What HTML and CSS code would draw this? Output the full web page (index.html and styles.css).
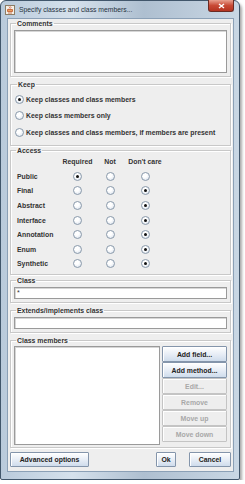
FILE: index.html
```html
<!DOCTYPE html>
<html lang="en">
<head>
    <meta charset="UTF-8">
    <title>Specify classes and class members...</title>
    <link rel="stylesheet" href="styles.css">
</head>
<body>
    <div class="window">
        <div class="titlebar">
            <span class="app-icon">
                <svg width="10" height="10" viewBox="0 0 10 10">
                    <rect x="0.5" y="0.5" width="9" height="9" fill="#f4f1e8" stroke="#8c7d66"/>
                    <path d="M3 8 h4 M2.5 6.5 h5 v-2 h-5 z" stroke="#c0572a" fill="#e9a060" stroke-width="0.8"/>
                    <path d="M4 3.5 q1 -1 0 -2 M5.5 3.5 q1 -1 0 -2" stroke="#d04020" fill="none" stroke-width="0.7"/>
                </svg>
            </span>
            <span class="title">Specify classes and class members...</span>
            <span class="close">
                <svg width="7" height="6" viewBox="0 0 7 6">
                    <path d="M1 1 L6 5 M6 1 L1 5" stroke="#fff" stroke-width="1.4"/>
                </svg>
            </span>
        </div>
        <div class="client">
            <fieldset class="group comments-group">
                <legend>Comments</legend>
                <div class="textarea comments"></div>
            </fieldset>

            <fieldset class="group keep">
                <legend>Keep</legend>
                <div class="radio-row"><span class="radio on"></span>Keep classes and class members</div>
                <div class="radio-row"><span class="radio"></span>Keep class members only</div>
                <div class="radio-row"><span class="radio"></span>Keep classes and class members, if members are present</div>
            </fieldset>

            <fieldset class="group access">
                <legend>Access</legend>
                <div class="access-grid">
                    <span></span><span class="head">Required</span><span class="head">Not</span><span class="head">Don't care</span>
                    <span class="name">Public</span><span class="cell"><span class="radio on"></span></span><span class="cell"><span class="radio"></span></span><span class="cell"><span class="radio"></span></span>
                    <span class="name">Final</span><span class="cell"><span class="radio"></span></span><span class="cell"><span class="radio"></span></span><span class="cell"><span class="radio on"></span></span>
                    <span class="name">Abstract</span><span class="cell"><span class="radio"></span></span><span class="cell"><span class="radio"></span></span><span class="cell"><span class="radio on"></span></span>
                    <span class="name">Interface</span><span class="cell"><span class="radio"></span></span><span class="cell"><span class="radio"></span></span><span class="cell"><span class="radio on"></span></span>
                    <span class="name">Annotation</span><span class="cell"><span class="radio"></span></span><span class="cell"><span class="radio"></span></span><span class="cell"><span class="radio on"></span></span>
                    <span class="name">Enum</span><span class="cell"><span class="radio"></span></span><span class="cell"><span class="radio"></span></span><span class="cell"><span class="radio on"></span></span>
                    <span class="name">Synthetic</span><span class="cell"><span class="radio"></span></span><span class="cell"><span class="radio"></span></span><span class="cell"><span class="radio on"></span></span>
                </div>
            </fieldset>

            <fieldset class="group class-group">
                <legend>Class</legend>
                <div class="textfield">*</div>
            </fieldset>

            <fieldset class="group">
                <legend>Extends/implements class</legend>
                <div class="textfield"></div>
            </fieldset>

            <fieldset class="group members">
                <legend>Class members</legend>
                <div class="members-body">
                    <div class="textarea list"></div>
                    <div class="member-buttons">
                        <button>Add field...</button>
                        <button>Add method...</button>
                        <button disabled>Edit...</button>
                        <button disabled>Remove</button>
                        <button disabled>Move up</button>
                        <button disabled>Move down</button>
                    </div>
                </div>
            </fieldset>

            <div class="footer">
                <button class="advanced">Advanced options</button>
                <div class="spacer"></div>
                <button class="ok">Ok</button>
                <button class="cancel">Cancel</button>
            </div>
        </div>
    </div>
</body>
</html>
```

FILE: styles.css
```css
body {
    margin: 0;
    background-color: #ffffff;
    font-family: 'Liberation Sans', Arial, sans-serif;
}
.window {
    width: 240px;
    height: 480px;
    box-sizing: border-box;
    border: 1px solid #41566b;
    border-radius: 6px 6px 2px 2px;
    background: linear-gradient(90deg, #b9cadb 0%, #d5e1ec 30%, #aebfd0 60%, #c9d7e4 100%);
    box-shadow: 2px 3px 3px rgba(0, 0, 0, 0.35);
    padding: 0 5px 7px 6px;
    display: flex;
    flex-direction: column;
}
.titlebar {
    height: 17px;
    flex-shrink: 0;
    display: flex;
    align-items: center;
    position: relative;
}
.app-icon {
    display: flex;
    margin: 0 4px 0 -2px;
}
.title {
    font-size: 6.8px;
    color: #26323e;
}
.close {
    position: absolute;
    right: 0;
    top: -1px;
    width: 24px;
    height: 11px;
    border: 1px solid #6b2a22;
    border-top: none;
    border-radius: 0 0 3px 3px;
    background: linear-gradient(#e8a08f, #c84a35 50%, #b43320);
    display: flex;
    align-items: center;
    justify-content: center;
}
.client {
    flex: 1;
    background-color: #eeeeee;
    border: 1px solid #8ba0b6;
    padding: 0 2px 3px 2px;
    display: flex;
    flex-direction: column;
    font-size: 6.9px;
    font-weight: bold;
    color: #333333;
}
.group {
    margin: 3px 0 0 0;
    padding: 0 3px 3px 3px;
    border: 1px solid #c8c8c8;
    box-shadow: inset 1px 1px 0 #ffffff, 1px 1px 0 #ffffff;
    min-width: 0;
}
.comments-group {
    margin-top: 0;
}
legend {
    padding: 0 1px;
    margin-left: 2px;
    color: #333333;
    line-height: 9px;
}
.textarea {
    background: #ffffff;
    border: 1px solid #9a9a9a;
    box-shadow: inset 1px 1px 0 #d6d6d6;
}
.comments {
    height: 41px;
    margin-top: 2px;
}
.keep {
    padding: 2px 3px 4px 4px;
}
.radio-row {
    display: flex;
    align-items: center;
    height: 16.5px;
}
.radio-row .radio {
    margin-right: 2px;
}
.radio {
    display: inline-block;
    width: 7px;
    height: 7px;
    border-radius: 50%;
    border: 1px solid #8a9aab;
    background: radial-gradient(circle at 40% 35%, #ffffff 30%, #d5deea 100%);
    position: relative;
}
.radio.on::after {
    content: '';
    position: absolute;
    left: 2px;
    top: 2px;
    width: 3px;
    height: 3px;
    border-radius: 50%;
    background: #111111;
}
.access {
    margin-top: 0;
}
.access-grid {
    display: grid;
    grid-template-columns: 44px 33px 32px 38px;
    grid-auto-rows: 14.6px;
    align-items: center;
    padding-left: 3px;
}
.head {
    text-align: center;
}
.cell {
    display: flex;
    justify-content: center;
}
.class-group {
    margin-top: 1px;
}
.textfield {
    height: 10px;
    margin-top: 2px;
    background: #ffffff;
    border: 1px solid #9a9a9a;
    box-shadow: inset 1px 1px 0 #d6d6d6;
    font-weight: normal;
    font-size: 7px;
    line-height: 9px;
    padding-left: 2px;
}
.members {
    padding-bottom: 2px;
}
.members-body {
    display: flex;
    gap: 2px;
    margin-top: 1px;
}
.list {
    flex: 1;
    height: 97px;
}
.member-buttons {
    width: 65px;
    display: flex;
    flex-direction: column;
}
button {
    font-family: 'Liberation Sans', Arial, sans-serif;
    font-size: 6.9px;
    font-weight: bold;
    color: #222222;
    height: 16px;
    padding: 0;
    border: 1px solid #8495ab;
    border-radius: 1px;
    background: linear-gradient(#ffffff, #e8eef6 50%, #cfdcec);
    box-shadow: inset 1px 1px 0 #ffffff;
}
button:disabled {
    color: #a8a8a8;
    border-color: #c4c4c4;
    background: #eeeeee;
}
.footer {
    display: flex;
    align-items: center;
    margin-top: 4px;
}
.footer button {
    height: 15px;
}
.advanced {
    width: 79px;
}
.spacer {
    flex: 1;
}
.ok {
    width: 20px;
}
.cancel {
    width: 42px;
    margin-left: 13px;
}
```
